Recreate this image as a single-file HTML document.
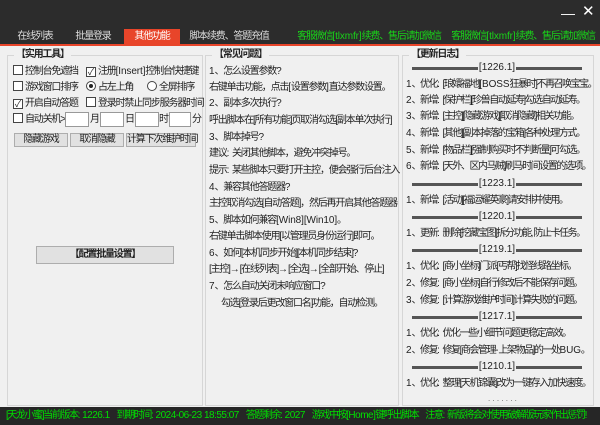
<!DOCTYPE html>
<html><head><meta charset="utf-8"><style>
*{margin:0;padding:0;box-sizing:border-box}
body{width:600px;height:425px;overflow:hidden;background:#f0f0f0;font-family:"Liberation Sans","Noto Sans CJK SC",sans-serif;font-size:10px;letter-spacing:-1.2px;color:#222;position:relative}
.l{letter-spacing:-0.1px}
.a{position:absolute;white-space:nowrap;line-height:14px}
.r{letter-spacing:-1.45px}
#top{position:absolute;left:0;top:0;width:600px;height:44px;background:#2c2c2c}
#red{position:absolute;left:0;top:44px;width:600px;height:2px;background:#e8452a}
.tab{position:absolute;top:30px;height:14px;color:#ddd;line-height:14px;text-align:center;white-space:nowrap}
.grp{position:absolute;border:1px solid #d6d6d6;background:#f0f0f0}
.ttl{position:absolute;background:#f0f0f0;font-weight:bold;padding:0 2px}
.cb{display:inline-block;width:10px;height:10px;border:1px solid #444;vertical-align:-1px;margin-right:2px;background:#fff;position:relative;font-size:9px;line-height:8px;text-align:center;letter-spacing:0}
.rb{display:inline-block;width:10px;height:10px;border:1px solid #444;border-radius:50%;vertical-align:-1px;margin-right:2px;background:#fff;position:relative}
.in{position:absolute;height:15px;background:#fff;border:1px solid #999}
.btn{position:absolute;height:14px;background:#e1e1e1;border:1px solid #adadad;text-align:center;line-height:12px;white-space:nowrap}
.sep{position:absolute;left:412px;width:170px;height:14px}
.sep i{position:absolute;top:6px;height:3px;background:#555}
.sep b{position:absolute;left:0;right:0;text-align:center;font-weight:normal;font-size:10px;line-height:14px;letter-spacing:0}
#st{position:absolute;left:0;top:407px;width:600px;height:18px;background:#262626;color:#00e000;letter-spacing:-1.4px;line-height:18px;padding-left:6px;white-space:nowrap;overflow:hidden}
#st .l{letter-spacing:-0.5px}
</style></head><body>
<div id="top"></div>
<div class="a" style="left:561px;top:6px;color:#fff;font-size:14px;letter-spacing:0">—</div>
<div class="a" style="left:582px;top:5px;color:#fff;font-size:15px;letter-spacing:0">✕</div>
<div class="tab" style="left:124px;width:56px;top:29px;height:15px;background:#e8452a;color:#fff"></div>
<div class="tab" style="left:10px;width:50px">在线列表</div>
<div class="tab" style="left:68px;width:50px">批量登录</div>
<div class="tab" style="left:124px;width:56px;color:#fff">其他功能</div>
<div class="tab" style="left:188px;width:82px">脚本续费、答题充值</div>
<div class="tab" style="left:296px;width:146px;color:#19d419">客服微信<span class="l">[tlxmfr]</span>续费、售后请加微信</div>
<div class="tab" style="left:450px;width:146px;color:#19d419">客服微信<span class="l">[tlxmfr]</span>续费、售后请加微信</div>
<div id="red"></div>

<div class="grp" style="left:7px;top:55px;width:196px;height:351px"></div>
<div class="ttl a" style="left:14px;top:48px">【实用工具】</div>
<div class="grp" style="left:205px;top:55px;width:194px;height:351px"></div>
<div class="ttl a" style="left:212px;top:48px">【常见问题】</div>
<div class="grp" style="left:402px;top:55px;width:192px;height:351px"></div>
<div class="ttl a" style="left:409px;top:48px">【更新日志】</div>

<div class="a" style="left:13px;top:65px"><span class="cb"></span>控制台免遮挡</div>
<div class="a" style="left:86px;top:65px"><span class="cb">✓</span>注册<span class="l">[Insert]</span>控制台快捷键</div>
<div class="a" style="left:13px;top:81px"><span class="cb"></span>游戏窗口排序</div>
<div class="a" style="left:86px;top:81px"><span class="rb"><span style="position:absolute;left:2px;top:2px;width:4px;height:4px;border-radius:50%;background:#222"></span></span>占左上角</div>
<div class="a" style="left:147px;top:81px"><span class="rb"></span>全屏排序</div>
<div class="a" style="left:13px;top:97px"><span class="cb">✓</span>开启自动答题</div>
<div class="a" style="left:86px;top:97px"><span class="cb"></span>登录时禁止同步服务器时间</div>
<div class="a" style="left:13px;top:113px"><span class="cb"></span>自动关机&gt;</div>
<div class="in" style="left:65px;top:112px;width:24px"></div><div class="a" style="left:90px;top:113px">月</div>
<div class="in" style="left:100px;top:112px;width:24px"></div><div class="a" style="left:125px;top:113px">日</div>
<div class="in" style="left:135px;top:112px;width:24px"></div><div class="a" style="left:159px;top:113px">时</div>
<div class="in" style="left:169px;top:112px;width:22px"></div><div class="a" style="left:192px;top:113px">分</div>
<div class="btn" style="left:14px;top:133px;width:54px">隐藏游戏</div>
<div class="btn" style="left:70px;top:133px;width:54px">取消隐藏</div>
<div class="btn" style="left:126px;top:133px;width:70px">计算下次维护时间</div>
<div class="btn" style="left:36px;top:246px;width:138px;height:18px;line-height:16px;font-weight:bold">【配置批量设置】</div>

<div class="a" style="left:209px;top:65px"><span class="l">1</span>、怎么设置参数<span class="l">?</span></div>
<div class="a" style="left:209px;top:81px">右键单击功能，点击<span class="l">[</span>设置参数<span class="l">]</span>直达参数设置。</div>
<div class="a" style="left:209px;top:97px"><span class="l">2</span>、副本多次执行<span class="l">?</span></div>
<div class="a" style="left:209px;top:114px">呼出脚本在[所有功能]页取消勾选[副本单次执行]</div>
<div class="a" style="left:209px;top:131px"><span class="l">3</span>、脚本掉号<span class="l">?</span></div>
<div class="a" style="left:209px;top:147px">建议<span class="l">: </span>关闭其他脚本，避免冲突掉号。</div>
<div class="a" style="left:209px;top:164px">提示<span class="l">: </span>某些脚本只要打开主控，便会强行后台注入</div>
<div class="a" style="left:209px;top:181px"><span class="l">4</span>、兼容其他答题器<span class="l">?</span></div>
<div class="a" style="left:209px;top:197px">主控取消勾选[自动答题]，然后再开启其他答题器</div>
<div class="a" style="left:209px;top:214px"><span class="l">5</span>、脚本如何兼容<span class="l">[Win8][Win10]</span>。</div>
<div class="a" style="left:209px;top:230px">右键单击脚本使用[以管理员身份运行]即可。</div>
<div class="a" style="left:209px;top:247px"><span class="l">6</span>、如何[本机同步开始][本机同步结束]<span class="l">?</span></div>
<div class="a" style="left:209px;top:263px">[主控]<span class="l">→</span>[在线列表]<span class="l">→</span>[全选]<span class="l">→</span>[全部开始、停止]</div>
<div class="a" style="left:209px;top:280px"><span class="l">7</span>、怎么自动关闭未响应窗口<span class="l">?</span></div>
<div class="a" style="left:221px;top:297px">勾选[登录后更改窗口名]功能，自动检测。</div>

<div class="sep" style="top:61px"><i style="left:0;width:66px"></i><b>[1226.1]</b><i style="right:0;width:66px"></i></div>
<div class="a r" style="left:406px;top:78px"><span class="l">1</span>、优化<span class="l">: </span>[琅嬛福地]<span class="l">[BOSS</span>狂暴时]不再召唤宝宝。</div>
<div class="a r" style="left:406px;top:94px"><span class="l">2</span>、新增<span class="l">: </span>[保护栏][珍兽自动延寿]勾选自动延寿。</div>
<div class="a r" style="left:406px;top:110px"><span class="l">3</span>、新增<span class="l">: </span>[主控][隐藏游戏][取消隐藏]相关功能。</div>
<div class="a r" style="left:406px;top:127px"><span class="l">4</span>、新增<span class="l">: </span>[其他][副本掉落的宝箱]各种处理方式。</div>
<div class="a r" style="left:406px;top:144px"><span class="l">5</span>、新增<span class="l">: </span>[物品栏][强制购买时不判断量]可勾选。</div>
<div class="a r" style="left:406px;top:160px"><span class="l">6</span>、新增<span class="l">: </span>[天外、区内马贼]刷马时间设置的选项。</div>
<div class="sep" style="top:177px"><i style="left:0;width:66px"></i><b>[1223.1]</b><i style="right:0;width:66px"></i></div>
<div class="a r" style="left:406px;top:194px"><span class="l">1</span>、新增<span class="l">: </span>[活动][福运耀英豪]请安排并使用。</div>
<div class="sep" style="top:210px"><i style="left:0;width:66px"></i><b>[1220.1]</b><i style="right:0;width:66px"></i></div>
<div class="a r" style="left:406px;top:227px"><span class="l">1</span>、更新<span class="l">: </span>删除[挖藏宝图]拆分功能<span class="l">,</span>防止卡任务。</div>
<div class="sep" style="top:243px"><i style="left:0;width:66px"></i><b>[1219.1]</b><i style="right:0;width:66px"></i></div>
<div class="a r" style="left:406px;top:260px"><span class="l">1</span>、优化<span class="l">: </span>[商小坐标]门派[丐帮]找怪线路坐标。</div>
<div class="a r" style="left:406px;top:277px"><span class="l">2</span>、修复<span class="l">: </span>[商小坐标]自行修改后不能保存问题。</div>
<div class="a r" style="left:406px;top:294px"><span class="l">3</span>、修复<span class="l">: </span>[计算游戏维护时间]计算失败的问题。</div>
<div class="sep" style="top:310px"><i style="left:0;width:66px"></i><b>[1217.1]</b><i style="right:0;width:66px"></i></div>
<div class="a r" style="left:406px;top:327px"><span class="l">1</span>、优化<span class="l">: </span>优化一些小细节问题更稳定高效。</div>
<div class="a r" style="left:406px;top:344px"><span class="l">2</span>、修复<span class="l">: </span>修复[商会管理<span class="l">-</span>上架物品]的一处<span class="l">BUG</span>。</div>
<div class="sep" style="top:360px"><i style="left:0;width:66px"></i><b>[1210.1]</b><i style="right:0;width:66px"></i></div>
<div class="a r" style="left:406px;top:377px"><span class="l">1</span>、优化<span class="l">: </span>整理[天机锦囊]改为一键存入加快速度。</div>
<div class="a" style="left:488px;top:392px;font-size:8px;color:#666;letter-spacing:0">. . . . . . .</div>

<div id="st">[天龙小蜜]当前版本<span class="l">: 1226.1&nbsp;&nbsp;&nbsp;</span>到期时间<span class="l">: 2024-06-23 18:55:07&nbsp;&nbsp;&nbsp;</span>答题剩余<span class="l">: 2027&nbsp;&nbsp;&nbsp;</span>游戏中按<span class="l">[Home]</span>键呼出脚本<span class="l">&nbsp;&nbsp;&nbsp;</span>注意<span class="l">: </span>新版将会对使用破解版玩家作出惩罚<span class="l">!</span></div>
</body></html>
